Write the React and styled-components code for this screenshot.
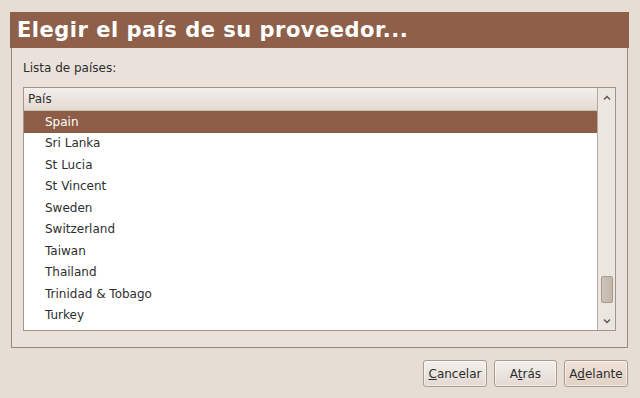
import React from "react";
import styled, { createGlobalStyle } from "styled-components";

const Global = createGlobalStyle`
  html, body { margin: 0; padding: 0; background: #e6ddd4; }
  body { font-family: "DejaVu Sans", "Liberation Sans", sans-serif; }
`;

const Page = styled.div`
  width: 640px;
  height: 398px;
  box-sizing: border-box;
  padding: 12px 12px 0 11px;
  display: flex;
  flex-direction: column;
  background: #e6ddd4;
`;

const Panel = styled.div`
  height: 300px;
  flex: none;
  box-sizing: border-box;
  border: 1px solid #9c8677;
  border-top: none;
  display: flex;
  flex-direction: column;
  background: #e9e1da;
`;

const Header = styled.div`
  height: 36px;
  flex: none;
  margin: 0 -1px;
  background: #8e5f49;
  color: #fff;
  font-weight: bold;
  font-size: 21px;
  display: flex;
  align-items: center;
  padding-left: 7px;
  letter-spacing: 0.5px;
`;

const Body = styled.div`
  flex: 1;
  min-height: 0;
  padding: 11px 11px 16px 11px;
  display: flex;
  flex-direction: column;
`;

const Label = styled.div`
  font-size: 12px;
  color: #2e2e2e;
  height: 18px;
  line-height: 18px;
  margin-bottom: 10px;
`;

const ListFrame = styled.div`
  flex: 1;
  min-height: 0;
  display: flex;
  border: 1px solid #a1948a;
  background: #fff;
`;

const List = styled.div`
  flex: 1;
  display: flex;
  flex-direction: column;
  overflow: hidden;
`;

const ColumnHeader = styled.div`
  height: 23px;
  flex: none;
  box-sizing: border-box;
  border-bottom: 1px solid #c9beb4;
  background: linear-gradient(#f3efeb, #e3dad2);
  font-size: 12px;
  color: #2e2e2e;
  display: flex;
  align-items: center;
  padding-left: 4px;
`;

const Row = styled.div`
  height: 21.5px;
  flex: none;
  font-size: 12px;
  display: flex;
  align-items: center;
  padding-left: 21px;
  color: ${(p) => (p.$selected ? "#fff" : "#2e2e2e")};
  background: ${(p) => (p.$selected ? "#8d5d47" : "#fff")};
`;

const Scrollbar = styled.div`
  width: 18px;
  flex: none;
  box-sizing: border-box;
  border-left: 1px solid #b7aa9f;
  background: #ece6e0;
  display: flex;
  flex-direction: column;
  align-items: center;
  padding: 2px 0;
`;

const Arrow = styled.div`
  height: 14px;
  width: 14px;
  flex: none;
  display: flex;
  align-items: center;
  justify-content: center;
`;

const Trough = styled.div`
  flex: 1;
  width: 100%;
  position: relative;
`;

const Thumb = styled.div`
  position: absolute;
  left: 3px;
  right: 2px;
  top: 172px;
  height: 27px;
  border: 1px solid #a89a8f;
  border-radius: 2px;
  background: linear-gradient(90deg, #cfc3b8, #c4b6aa);
  box-sizing: border-box;
`;

const Footer = styled.div`
  flex: 1;
  display: flex;
  justify-content: flex-end;
  align-items: flex-start;
  gap: 7px;
  padding: 12px 0 0 0;
`;

const Button = styled.button`
  height: 27px;
  min-width: ${(p) => p.$w}px;
  box-sizing: border-box;
  border: 1px solid #a99b90;
  border-radius: 3px;
  background: ${(p) =>
    p.$default
      ? "linear-gradient(#efe2d9, #e2d2c6)"
      : "linear-gradient(#f4f0ec, #e2d9d1)"};
  font-family: "DejaVu Sans", sans-serif;
  font-size: 12px;
  color: #2e2e2e;
  padding: 0 4px;
  box-shadow: inset 0 0 0 1px rgba(255, 255, 255, 0.5);
  u { text-decoration: underline; }
`;

const countries = [
  "Spain",
  "Sri Lanka",
  "St Lucia",
  "St Vincent",
  "Sweden",
  "Switzerland",
  "Taiwan",
  "Thailand",
  "Trinidad & Tobago",
  "Turkey",
];

export default function App() {
  return (
    <>
      <Global />
      <Page>
        <Header>Elegir el país de su proveedor...</Header>
        <Panel>
          <Body>
            <Label>Lista de países:</Label>
            <ListFrame>
              <List>
                <ColumnHeader>País</ColumnHeader>
                {countries.map((c, i) => (
                  <Row key={c} $selected={i === 0}>
                    {c}
                  </Row>
                ))}
              </List>
              <Scrollbar>
                <Arrow>
                  <svg width="8" height="5" viewBox="0 0 8 5">
                    <path d="M1 4.5 L4 1.5 L7 4.5" fill="none" stroke="#555" strokeWidth="1.4" />
                  </svg>
                </Arrow>
                <Trough>
                  <Thumb />
                </Trough>
                <Arrow>
                  <svg width="8" height="5" viewBox="0 0 8 5">
                    <path d="M1 0.5 L4 3.5 L7 0.5" fill="none" stroke="#555" strokeWidth="1.4" />
                  </svg>
                </Arrow>
              </Scrollbar>
            </ListFrame>
          </Body>
        </Panel>
        <Footer>
          <Button $w={64}><u>C</u>ancelar</Button>
          <Button $w={63}>A<u>t</u>rás</Button>
          <Button $w={64} $default>A<u>d</u>elante</Button>
        </Footer>
      </Page>
    </>
  );
}
